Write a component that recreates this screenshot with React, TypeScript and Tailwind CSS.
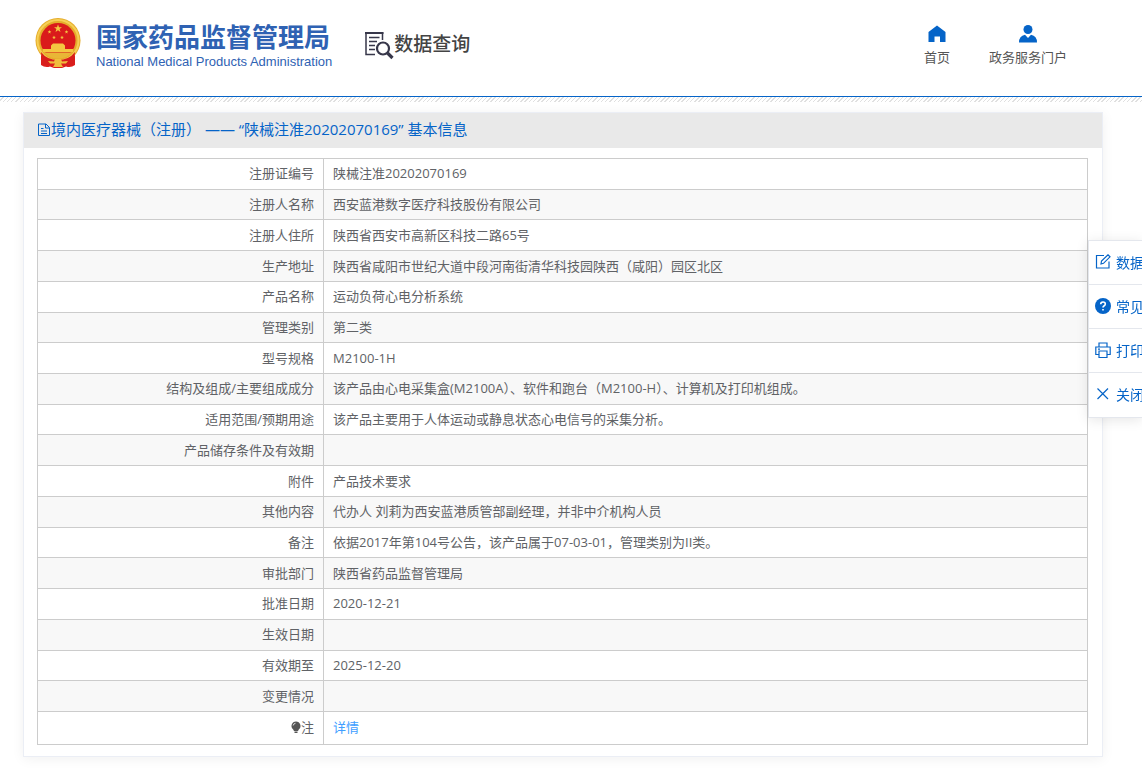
import { Fragment } from "react";
import { clsx } from "clsx";

const rows = [
  { label: "注册证编号", value: "陕械注准20202070169" },
  { label: "注册人名称", value: "西安蓝港数字医疗科技股份有限公司" },
  { label: "注册人住所", value: "陕西省西安市高新区科技二路65号" },
  { label: "生产地址", value: "陕西省咸阳市世纪大道中段河南街清华科技园陕西（咸阳）园区北区" },
  { label: "产品名称", value: "运动负荷心电分析系统" },
  { label: "管理类别", value: "第二类" },
  { label: "型号规格", value: "M2100-1H" },
  { label: "结构及组成/主要组成成分", value: "该产品由心电采集盒(M2100A）、软件和跑台（M2100-H）、计算机及打印机组成。" },
  { label: "适用范围/预期用途", value: "该产品主要用于人体运动或静息状态心电信号的采集分析。" },
  { label: "产品储存条件及有效期", value: "" },
  { label: "附件", value: "产品技术要求" },
  { label: "其他内容", value: "代办人 刘莉为西安蓝港质管部副经理，并非中介机构人员" },
  { label: "备注", value: "依据2017年第104号公告，该产品属于07-03-01，管理类别为II类。" },
  { label: "审批部门", value: "陕西省药品监督管理局" },
  { label: "批准日期", value: "2020-12-21" },
  { label: "生效日期", value: "" },
  { label: "有效期至", value: "2025-12-20" },
  { label: "变更情况", value: "" },
];

const STAR = "0,-10 2.4,-3.2 9.5,-3.1 3.8,1.2 5.9,8.1 0,4 -5.9,8.1 -3.8,1.2 -9.5,-3.1 -2.4,-3.2";

const Emblem = () => (
  <svg viewBox="0 0 46 50" className="h-[50px] w-[46px] shrink-0" aria-hidden="true">
    <path d="M6 32 L6 47 Q10 50 15 48.500 L19 50 L27 50 L31 48.500 Q36 50 40 47 L40 32Z" fill="#dc1f1c" />
    <circle cx="23" cy="22.5" r="22.5" fill="#e5ac2b" />
    <circle cx="23" cy="22.5" r="20.5" fill="none" stroke="#f6cf55" strokeWidth="2" />
    <circle cx="23" cy="22.5" r="17.5" fill="#da1a1b" />
    <g fill="#f4c741">
      <polygon points={STAR} transform="translate(23 10.5) scale(.42)" />
      <polygon points={STAR} transform="translate(14.5 14) scale(.2)" />
      <polygon points={STAR} transform="translate(31.5 14) scale(.2)" />
      <polygon points={STAR} transform="translate(19 19.5) scale(.2)" />
      <polygon points={STAR} transform="translate(27 19.5) scale(.2)" />
      <path d="M16 27.500 L18 25.500 H28 L30 27.500 V31 H38 V34 H8 V31 H16Z" />
    </g>
    <path d="M9 34.500 H37 Q32 40.500 23 40.500 Q14 40.500 9 34.500Z" fill="#e9b636" />
    <path d="M6 34 Q12 42 23 42 Q34 42 40 34 L39 46 Q34 49 28 45 L23 43 L18 45 Q12 49 7 46Z" fill="#d81e1c" />
    <path d="M13 43 L19 43.500 L20 41 H26 L27 43.500 L33 43 L31 45.500 H26 L28 49 H18 L20 45.500 H15Z" fill="#f0bd3b" />
  </svg>
);

const QueryIcon = () => (
  <svg viewBox="0 0 30 30" className="h-[30px] w-[30px] shrink-0" fill="none" stroke="#37374a" aria-hidden="true">
    <path d="M18.500 9 V2 H2 V23.500 H11" strokeWidth="1.500" />
    <path d="M1 2 H19.500" strokeWidth="2" />
    <path d="M5 6.500 H15.500 M5 10.500 H13 M5 14.500 H11 M5 18.500 H11" strokeWidth="1.500" />
    <circle cx="19" cy="17.500" r="6" strokeWidth="2.200" />
    <path d="M23.500 22 L28.500 27" strokeWidth="3.200" />
  </svg>
);

const HomeIcon = () => (
  <svg viewBox="0 0 18 18" className="h-[18px] w-[18px]" fill="#0564c8" aria-hidden="true">
    <path d="M9 .5 L17.500 7 V17 H12 V11.500 H6.500 V17 H.5 V7Z" />
  </svg>
);

const UserIcon = () => (
  <svg viewBox="0 0 18 18" className="h-[18px] w-[18px]" fill="#0564c8" aria-hidden="true">
    <circle cx="9" cy="4.500" r="4.500" />
    <path d="M0 17.500 Q0 11 6 9.800 L9 13 L12 9.800 Q18 11 18 17.500Z" />
  </svg>
);

const DocIcon = () => (
  <svg viewBox="0 0 12 14" className="mr-px h-3.5 w-3 shrink-0" fill="none" stroke="#0564c8" aria-hidden="true">
    <path d="M.5 1 H8 L11.500 4.500 V12.500 H.5Z M7.500 1 V5 H11.500 M3 5.500 H5.500 M3 8 H9 M3 10.500 H9" />
  </svg>
);

const BulbIcon = () => (
  <svg viewBox="0 0 10 13" className="inline-block h-[13px] w-2.5 align-[-2px]" aria-hidden="true">
    <path d="M5 .5 A4.500 4.500 0 0 1 7.800 8.500 L7 10 H3 L2.200 8.500 A4.500 4.500 0 0 1 5 .5Z M3.500 10.500 H6.500 V12 H3.500Z" fill="#555" />
    <path d="M2.200 4.500 Q2.500 2.500 4.500 2.300" fill="none" stroke="#fff" strokeWidth=".8" />
  </svg>
);

const sideItems = [
  {
    label: "数据",
    icon: <path d="M9 1.500 H1.500 V14 H14 V7.500 M6 10 L6.500 7 L13 .8 L15 2.800 L8.500 9.300Z" fill="none" stroke="#0564c8" strokeWidth="1.200" />,
  },
  {
    label: "常见",
    icon: (
      <>
        <circle cx="8" cy="8" r="8" fill="#0564c8" />
        <path d="M5.700 6.300 Q5.700 4 8 4 Q10.300 4 10.300 6 Q10.300 7.200 8.900 8 Q8 8.600 8 9.600 M8 11 V12.600" fill="none" stroke="#fff" strokeWidth="1.600" />
      </>
    ),
  },
  {
    label: "打印",
    icon: <path d="M4 5 V1 H12 V5 M4 12.500 H.8 V5 H15.200 V12.500 H12 M4 9 H12 V15.500 H4Z M3 7.200 H5" fill="none" stroke="#0564c8" strokeWidth="1.200" />,
  },
  {
    label: "关闭",
    icon: <path d="M2.500 2.500 L13 13 M13 2.500 L2.500 13" fill="none" stroke="#0564c8" strokeWidth="1.200" />,
  },
];

const Header = () => (
  <header className="flex h-[97px] items-start border-b border-[#0564c8] bg-white pr-[75px] pl-[35px]">
    <a href="#" className="mt-[18px] flex gap-[15px]">
      <Emblem />
      <div className="whitespace-nowrap text-[#2f62b3]">
        <div className="mt-1 text-[26px] leading-[30px] font-bold">国家药品监督管理局</div>
        <div className="font-['Liberation_Sans',sans-serif] text-[13px] leading-5">National Medical Products Administration</div>
      </div>
    </a>
    <div className="mt-[31px] ml-8 flex text-[19px] leading-[26px] font-medium whitespace-nowrap text-[#444]">
      <QueryIcon />
      数据查询
    </div>
    <nav className="mt-[25px] ml-auto flex gap-[39px] text-[13px] leading-[18px] text-[#555]">
      <a href="#" className="flex flex-col items-center gap-[5px]">
        <HomeIcon />
        首页
      </a>
      <a href="#" className="flex flex-col items-center gap-[5px]">
        <UserIcon />
        政务服务门户
      </a>
    </nav>
  </header>
);

const cell = "border border-[#ccc] px-[9px] pt-0 pb-px";

const DetailTable = () => (
  <table className="h-[587px] w-full border-collapse text-[13px] leading-5 text-[#606266]">
    <tbody>
      {rows.map((row) => (
        <tr key={row.label} className="h-[30px] even:bg-[#f8f8f8]">
          <th scope="row" className={clsx(cell, "w-[286px] text-right font-normal")}>{row.label}</th>
          <td className={cell}>{row.value}</td>
        </tr>
      ))}
      <tr className="h-8">
        <th scope="row" className={clsx(cell, "text-right font-normal")}>
          <BulbIcon />
          注
        </th>
        <td className={cell}>
          <a href="#" className="text-[#409eff]">详情</a>
        </td>
      </tr>
    </tbody>
  </table>
);

const SideMenu = () => (
  <aside className="fixed top-60 right-0 w-[54px] overflow-hidden border border-r-0 border-[#e4e7ed] bg-white pb-px shadow-[0_2px_12px_rgba(0,0,0,0.1)]">
    {sideItems.map((item, index) => (
      <Fragment key={item.label}>
        {index > 0 && <hr className="border-[#e4e7ed]" />}
        <button type="button" className="flex h-[43px] items-center gap-[5px] pl-1.5 text-[14px] whitespace-nowrap text-[#0564c8]">
          <svg viewBox="0 0 16 16" className="mb-0.5 h-4 w-4 shrink-0" aria-hidden="true">{item.icon}</svg>
          {item.label}
        </button>
      </Fragment>
    ))}
  </aside>
);

export default function App() {
  return (
    <div className="bg-white font-['Open_Sans','Noto_Sans_CJK_SC',sans-serif]">
      <Header />
      <div className="h-[5px] bg-[repeating-linear-gradient(135deg,#fff_0_2px,#e0e0e0_2px_3px)]" />
      <main className="mt-2.5 mr-[39px] mb-4 ml-[23px] border border-[#ebeef5] bg-white shadow-[0_2px_12px_rgba(0,0,0,0.06)]">
        <h1 className="flex h-[35px] items-center bg-[#e9e9e9] pb-0.5 pl-3.5 text-[15px] text-[#0564c8]">
          <DocIcon />
          境内医疗器械（注册） —— “陕械注准20202070169” 基本信息
        </h1>
        <div className="pt-2.5 pr-3.5 pb-[11px] pl-[13px]">
          <DetailTable />
        </div>
      </main>
      <SideMenu />
    </div>
  );
}
